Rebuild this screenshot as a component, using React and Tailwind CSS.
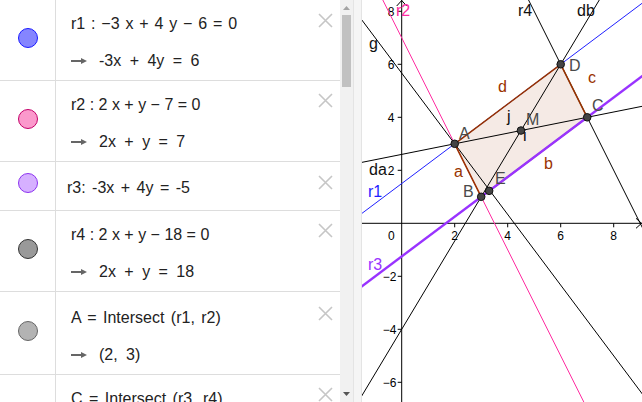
import React from 'react';

// world -> screen (page px) for the graphics view
const X = (x) => 401.7 + 26.5 * x;
const Y = (y) => 223.3 - 26.5 * y;

const P = { A: [2, 3], B: [3, 1], C: [7, 4], D: [6, 6], E: [3.3, 1.225], M: [4.5, 3.5] };

const ROWS = [
  { h: 'h-[81px]', circ: 'mt-[28px] border-[#1a1aff] bg-[#8585ff]', tp: 'pt-[14px] pl-[15px]', xm: 'mt-[13px]',
    l1: 'r1 : −3 x + 4 y − 6 = 0', l2: '-3x + 4y = 6', ws: '[word-spacing:1.4px]' },
  { h: 'h-[81px]', circ: 'mt-[28px] border-[#c4006a] bg-[#fb99cc]', tp: 'pt-[14px] pl-[15px]', xm: 'mt-[12px]',
    l1: 'r2 : 2 x + y − 7 = 0', l2: '2x + y = 7', ws: '[word-spacing:0px]' },
  { h: 'h-[49px]', circ: 'mt-[11px] border-[#8c33f0] bg-[#d6b0ff]', tp: 'pt-[16px] pl-[11px]', xm: 'mt-[13px]',
    l1: 'r3: -3x + 4y = -5', ws: '[word-spacing:2px]' },
  { h: 'h-[81px]', circ: 'mt-[28px] border-[#333333] bg-[#999999]', tp: 'pt-[14px] pl-[15px]', xm: 'mt-[12px]',
    l1: 'r4 : 2 x + y − 18 = 0', l2: '2x + y = 18', ws: '[word-spacing:0px]' },
  { h: 'h-[83px]', circ: 'mt-[29px] border-[#666666] bg-[#b3b3b3]', tp: 'pt-[16px] pl-[15px]', xm: 'mt-[14px]',
    l1: 'A = Intersect (r1, r2)', l2: '(2, 3)', ws: '[word-spacing:2px]' },
  { h: 'h-[81px]', circ: 'mt-[28px] border-[#666666] bg-[#b3b3b3]', tp: 'pt-[14px] pl-[15px]', xm: 'mt-[12px]',
    l1: 'C = Intersect (r3, r4)', ws: '[word-spacing:2px]' },
];

function CloseX({ className }) {
  return (
    <svg width="15" height="15" viewBox="0 0 15 15" className={className}>
      <path d="M1 1 L14 14 M14 1 L1 14" stroke="#c6c6c6" strokeWidth="1.6" />
    </svg>
  );
}

function Arrow() {
  return (
    <svg width="16" height="8" viewBox="0 0 16 8" className="mr-[12px]">
      <path d="M0 4 H12" stroke="#666" strokeWidth="2" />
      <path d="M10 1 L16 4 L10 7 Z" fill="#666" />
    </svg>
  );
}

function Row({ r }) {
  return (
    <div className={`flex shrink-0 border-b border-[#dddddd] ${r.h}`}>
      <div className="flex w-[56px] shrink-0 justify-center border-r border-[#dddddd]">
        <div className={`h-5 w-5 rounded-full border ${r.circ}`} />
      </div>
      <div className="flex flex-1">
        <div className={`flex-1 ${r.tp}`}>
          <div className={`h-5 whitespace-nowrap text-[16px] leading-5 ${r.ws}`}>{r.l1}</div>
          {r.l2 && (
            <div className="mt-[17px] flex h-5 items-center whitespace-nowrap text-[16px] leading-5 [word-spacing:4px]">
              <Arrow />
              <span>{r.l2}</span>
            </div>
          )}
        </div>
        <CloseX className={`mr-[7px] shrink-0 ${r.xm}`} />
      </div>
    </div>
  );
}

function InfLine({ p, q, stroke, w = 1 }) {
  const dx = q[0] - p[0], dy = q[1] - p[1], k = 30;
  return (
    <line x1={X(p[0] - k * dx)} y1={Y(p[1] - k * dy)} x2={X(p[0] + k * dx)} y2={Y(p[1] + k * dy)}
      stroke={stroke} strokeWidth={w} />
  );
}

function Seg({ p, q }) {
  return <line x1={X(p[0])} y1={Y(p[1])} x2={X(q[0])} y2={Y(q[1])} stroke="#993300" strokeWidth="1.5" />;
}

function Graphics() {
  const poly = [P.A, P.B, P.C, P.D].map(([x, y]) => `${X(x)},${Y(y)}`).join(' ');
  const lab = { fontSize: 16, fontFamily: '"Liberation Sans", Arial, sans-serif' };
  const ax = { fontSize: 12, fontFamily: '"Liberation Sans", Arial, sans-serif', fill: '#000' };
  return (
    <svg width="280" height="402" viewBox="362 0 280 402" className="block shrink-0">
      <rect x="362" y="0" width="280" height="402" fill="#fff" />
      {/* polygon fill */}
      <polygon points={poly} fill="rgba(153,51,0,0.1)" />

      {/* axes */}
      <line x1="362" y1={Y(0)} x2="642" y2={Y(0)} stroke="#000" strokeWidth="1" />
      <line x1={X(0)} y1="0" x2={X(0)} y2="402" stroke="#000" strokeWidth="1" />
      <path d={`M636 ${Y(0) - 5} L641.5 ${Y(0)} L636 ${Y(0) + 5}`} fill="none" stroke="#000" strokeWidth="1" />
      <path d={`M${X(0) - 5} 6 L${X(0)} 0.5 L${X(0) + 5} 6`} fill="none" stroke="#000" strokeWidth="1" />
      {[2, 4, 6, 8].map((n) => (
        <line key={'xt' + n} x1={X(n)} y1={Y(0)} x2={X(n)} y2={Y(0) + 4} stroke="#000" />
      ))}
      {[-6, -4, -2, 2, 4, 6, 8].map((n) => (
        <line key={'yt' + n} x1={X(0) - 4} y1={Y(n)} x2={X(0)} y2={Y(n)} stroke="#000" />
      ))}
      <text x="391.3" y="240" textAnchor="middle" {...ax}>0</text>
      {[2, 4, 6, 8].map((n) => (
        <text key={'xl' + n} x={X(n)} y="240" textAnchor="middle" {...ax}>{n}</text>
      ))}
      {[2, 4, 6, 8].map((n) => (
        <text key={'yl' + n} x="394.5" y={Y(n) + 4.2} textAnchor="end" {...ax}>{n}</text>
      ))}
      {[-2, -4, -6].map((n) => (
        <text key={'yn' + n} x="396.5" y={Y(n) + 4.2} textAnchor="end" {...ax}>{'−' + -n}</text>
      ))}

      {/* lines */}
      <InfLine p={P.A} q={[5, -1]} stroke="#000" />
      <InfLine p={P.C} q={P.D} stroke="#000" />
      <InfLine p={P.B} q={P.D} stroke="#000" />
      <InfLine p={P.A} q={P.C} stroke="#000" />
      <InfLine p={P.A} q={P.D} stroke="#1f1fff" />
      <InfLine p={P.A} q={P.B} stroke="#ff2aa0" />

      {/* polygon sides */}
      <Seg p={P.A} q={P.B} />
      <Seg p={P.B} q={P.C} />
      <Seg p={P.C} q={P.D} />
      <Seg p={P.D} q={P.A} />
      <InfLine p={P.B} q={P.C} stroke="#9933ff" w={2.4} />

      {/* points */}
      {Object.entries(P).map(([k, [x, y]]) => (
        <circle key={k} cx={X(x)} cy={Y(y)} r="3.8" fill="#444" stroke="#111" strokeWidth="1" />
      ))}

      {/* labels */}
      <g {...lab} fill="#ff2aa0"><text x="396" y="16">r2</text></g>
      <g {...lab} fill="#111">
        <text x="369" y="49">g</text>
        <text x="518" y="16">r4</text>
        <text x="577" y="16">db</text>
        <text x="369" y="175">da</text>
        <text x="507" y="122">j</text>
        <text x="523" y="141">i</text>
      </g>
      <g {...lab} fill="#1f1fff"><text x="368" y="197">r1</text></g>
      <g {...lab} fill="#9933ff"><text x="368" y="270">r3</text></g>
      <g {...lab} fill="#4a4a4a">
        <text x="459" y="139">A</text>
        <text x="569" y="71">D</text>
        <text x="592" y="111">C</text>
        <text x="526" y="125">M</text>
        <text x="495" y="184">E</text>
        <text x="463" y="197">B</text>
      </g>
      <g {...lab} fill="#993300">
        <text x="454" y="177">a</text>
        <text x="544" y="169">b</text>
        <text x="588" y="83">c</text>
        <text x="498" y="92">d</text>
      </g>
    </svg>
  );
}

export default function App() {
  return (
    <div className="flex h-[402px] w-[642px] overflow-hidden bg-white font-['Liberation_Sans',Arial,sans-serif] text-[#222]">
      <div className="flex h-full w-[340px] shrink-0 flex-col overflow-hidden">
        {ROWS.map((r, i) => <Row key={i} r={r} />)}
      </div>

      {/* scrollbar */}
      <div className="flex h-full w-[13px] shrink-0 flex-col bg-[#f1f1f1]">
        <div className="flex h-[15px] items-center justify-center">
          <svg width="7" height="4" viewBox="0 0 7 4"><path d="M0 4 L3.5 0 L7 4 Z" fill="#a3a3a3" /></svg>
        </div>
        <div className="ml-[2px] h-[72px] w-[9px] bg-[#c1c1c1]" />
        <div className="flex-1" />
        <div className="flex h-[16px] items-center justify-center">
          <svg width="7" height="4" viewBox="0 0 7 4"><path d="M0 0 L3.5 4 L7 0 Z" fill="#555" /></svg>
        </div>
      </div>

      {/* splitter */}
      <div className="h-full w-[9px] shrink-0 border-l border-r border-[#e4e4e4] bg-[#f5f5f5]" />

      <Graphics />
    </div>
  );
}
